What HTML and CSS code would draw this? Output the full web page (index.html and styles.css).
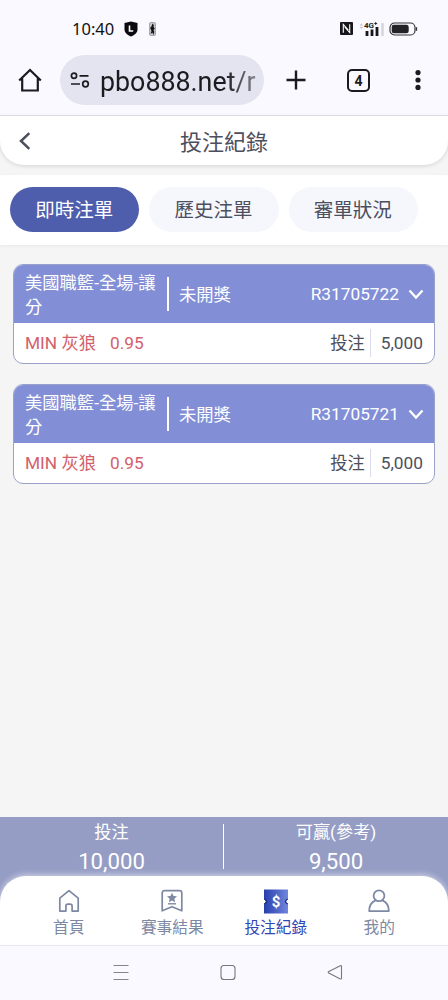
FILE: index.html
```html
<!DOCTYPE html>
<html lang="zh-Hant">
<head>
<meta charset="utf-8">
<meta name="viewport" content="width=device-width, initial-scale=1">
<title>投注紀錄</title>
<link rel="stylesheet" href="styles.css">
</head>
<body>
<div class="phone">
  <div class="status">
    <span class="clock">10:40</span>
    <svg class="shield" width="14" height="16" viewBox="0 0 14 16"><path d="M7 .5 13.500 2v6.500c0 3.500-3 5.500-6.500 7C3.500 14 .5 12 .5 8.500V2z" fill="#0b0b0f"/><path d="M5.500 4.500v5.500h3.700" fill="none" stroke="#fff" stroke-width="1.600"/></svg>
    <svg class="league" width="7" height="14" viewBox="0 0 7 14"><rect x=".5" y=".5" width="6" height="13" rx="1" fill="#c5c5cb" stroke="#85858b" stroke-width=".6"/><path d="M3.500 1.500 4.800 3 4.500 5l1.300 1.500L4.500 8l.8 2-1 3-.8-2.500L1.500 12l1-3L1.200 6l1.500-2z" fill="#111"/></svg>
    <span class="spacer"></span>
    <svg class="nfc" width="13" height="13" viewBox="0 0 13 13"><rect width="13" height="13" rx="1" fill="#17171b"/><path d="M3.300 10.800V2.500L8.300 8M9.700 2.200v8.300L4.700 5" fill="none" stroke="#fff" stroke-width="1.100"/></svg>
    <svg class="signal" width="26" height="16" viewBox="0 0 26 16"><path d="m.5 4.500 1.800-2 1.800 2zm0 1.500 1.800 2 1.800-2z" fill="#c4c4ca"/><text x="5" y="7.300" class="net">4G</text><path d="M16.700 1v3M15.200 2.500h3" stroke="#222" stroke-width=".9"/><path d="M8 10V15M13 8.500V15M18 6v9" stroke="#17171b" stroke-width="2.800"/><path d="M23.500 2v13" stroke="#d4d4da" stroke-width="2.500"/></svg>
    <svg class="battery" width="29" height="14" viewBox="0 0 29 14"><rect x="1" y="1" width="25" height="12" rx="4.500" fill="none" stroke="#33333a" stroke-width="1.200"/><rect x="2.700" y="2.700" width="17" height="8.600" rx="2.300" fill="#222227"/><path d="M27.500 5.200v3.600" stroke="#33333a" stroke-width="1.300"/></svg>
  </div>
  <div class="browser">
    <svg class="b-home" width="24" height="24" viewBox="0 0 24 24"><path d="M1.200 12.500 12 2l10.800 10.500M4.200 10.500v12h15.600v-12" fill="none" stroke="#1b1b1f" stroke-width="2.200"/></svg>
    <div class="address">
      <svg width="20" height="16" viewBox="0 0 20 16" fill="none" stroke="#1b1b1f" stroke-width="1.700"><circle cx="4" cy="3.800" r="2.600"/><path d="M9.500 3.800H18.500M1 12h9"/><circle cx="15.500" cy="12" r="2.800"/></svg>
      <span class="url">pbo888.net/r</span>
    </div>
    <svg class="b-plus" width="20" height="20" viewBox="0 0 20 20"><path d="M10 .5v19M.5 10h19" stroke="#1b1b1f" stroke-width="2.400"/></svg>
    <span class="b-tabs">4</span>
    <svg class="b-more" width="6" height="20" viewBox="0 0 6 20" fill="#1b1b1f"><circle cx="3" cy="2.600" r="2.600"/><circle cx="3" cy="10" r="2.600"/><circle cx="3" cy="17.400" r="2.600"/></svg>
  </div>
  <header class="title-bar">
    <svg class="back" width="12" height="18" viewBox="0 0 12 18"><path d="M10.300 1.200 2 9l8.300 7.800" fill="none" stroke="#4c4f5e" stroke-width="2.500"/></svg>
    <h1>投注紀錄</h1>
  </header>
  <nav class="tabs">
    <span class="tab tab-active">即時注單</span>
    <span class="tab">歷史注單</span>
    <span class="tab">審單狀況</span>
  </nav>
  <main class="bets">
    <article class="bet">
      <div class="bet-head">
        <span class="bet-type">美國職籃-全場-讓分</span>
        <span class="bet-state">未開獎</span>
        <span class="bet-id">R31705722</span>
        <svg class="chevron" width="16" height="11" viewBox="0 0 16 11"><path d="m1.500 1.500 6.500 7 6.500-7" fill="none" stroke="#fff" stroke-width="2.300"/></svg>
      </div>
      <div class="bet-body">
        <span class="pick">MIN 灰狼</span><span class="odds">0.95</span>
        <span class="stake-label">投注</span><span class="stake">5,000</span>
      </div>
    </article>
    <article class="bet">
      <div class="bet-head">
        <span class="bet-type">美國職籃-全場-讓分</span>
        <span class="bet-state">未開獎</span>
        <span class="bet-id">R31705721</span>
        <svg class="chevron" width="16" height="11" viewBox="0 0 16 11"><path d="m1.500 1.500 6.500 7 6.500-7" fill="none" stroke="#fff" stroke-width="2.300"/></svg>
      </div>
      <div class="bet-body">
        <span class="pick">MIN 灰狼</span><span class="odds">0.95</span>
        <span class="stake-label">投注</span><span class="stake">5,000</span>
      </div>
    </article>
  </main>
  <section class="summary">
    <div class="total"><span>投注</span><strong>10,000</strong></div>
    <div class="total"><span>可贏(參考)</span><strong>9,500</strong></div>
  </section>
  <nav class="bottom-nav">
    <span class="item">
      <svg width="24" height="26" viewBox="0 0 24 26" fill="none" stroke="#7d88a3" stroke-width="1.700" stroke-linejoin="round"><path d="M2.800 10.200 12 2.600l9.200 7.600v12.900h-6.100v-4.900q0-2-2-2h-2.200q-2 0-2 2v4.900H2.800z"/></svg>
      <span>首頁</span>
    </span>
    <span class="item">
      <svg width="24" height="26" viewBox="0 0 24 26" fill="none" stroke="#7d88a3" stroke-width="1.700" stroke-linejoin="round"><path d="M2.200 22.800V5q0-2.300 2.300-2.300h15q2.300 0 2.300 2.300v17.800L12 18.700z"/><path d="M8 15.800h8" stroke-width="1.400"/><path d="m12 4.700 1.500 3.200 3.500.4-2.600 2.400.7 3.500-3.100-1.800-3.100 1.800.7-3.500L7 8.300l3.500-.4z" fill="#7d88a3" stroke="none"/></svg>
      <span>賽事結果</span>
    </span>
    <span class="item item-active">
      <svg width="24" height="26" viewBox="0 0 24 26"><defs><linearGradient id="ticket"><stop offset="0" stop-color="#263fae"/><stop offset="1" stop-color="#7186dc"/></linearGradient></defs><path d="M0 1.500h24v24H0z" fill="url(#ticket)"/><path d="M0 11.300q3.600 2.200 0 4.400M24 11.300q-3.600 2.200 0 4.400" fill="#fff"/><path d="M.3 11q4.600 2.500 0 5M23.700 11q-4.600 2.500 0 5" fill="none" stroke="#1c2c80" stroke-width="1.300"/><text x="12" y="18.800" class="dollar">$</text></svg>
      <span>投注紀錄</span>
    </span>
    <span class="item">
      <svg width="24" height="26" viewBox="0 0 24 26" fill="none" stroke="#7d88a3" stroke-width="1.800" stroke-linejoin="round"><circle cx="12" cy="7.800" r="5.400"/><path d="M8.600 12.400C4.700 14 2.200 18 2.200 23.100h19.600c0-5.100-2.500-9.100-6.400-10.700"/></svg>
      <span>我的</span>
    </span>
  </nav>
  <div class="system-nav">
    <svg width="16" height="16" viewBox="0 0 16 16"><path d="M.5 1.500h15M.5 8.500h15M.5 15.500h15" stroke="#85858b" stroke-width="1"/></svg>
    <svg width="16" height="16" viewBox="0 0 16 16"><rect x="1" y="1.500" width="14" height="14" rx="3" fill="none" stroke="#77777d" stroke-width="1.100"/></svg>
    <svg width="16" height="16" viewBox="0 0 16 16"><path d="M13.300 1.700 1.800 7.500q-1.200.7 0 1.400l11.500 6q1.200.3 1.200-.9V2.600q0-1.200-1.200-.9z" fill="none" stroke="#77777d" stroke-width="1.100"/></svg>
  </div>
</div>
</body>
</html>
```
FILE: styles.css
```css
* { box-sizing: border-box; }
body {
  margin: 0;
  font-family: Roboto, "Noto Sans CJK TC", sans-serif;
  color: #4c4f5e;
}
svg { display: block; flex: none; }
.phone {
  width: 448px;
  height: 1000px;
  display: flex;
  flex-direction: column;
  background: #f5f5f6;
  overflow: hidden;
}
.status {
  height: 47px;
  flex: none;
  display: flex;
  align-items: center;
  padding: 10px 30px 0 72px;
  background: #faf9ff;
}
.clock { font: 400 16.500px/20px "Noto Sans", sans-serif; color: #111; width: 39px; white-space: nowrap; }
.shield { margin-left: 13px; }
.league { margin-left: 11px; }
.spacer { flex: 1; }
.signal { margin-left: 6px; }
.net { font: 700 8px Roboto, sans-serif; fill: #222; }
.battery { margin-left: 4px; }
.browser {
  height: 69px;
  flex: none;
  display: flex;
  align-items: center;
  padding: 0 27px 2px 18px;
  background: #faf9ff;
  border-bottom: 1px solid #e3e3ec;
}
.address {
  width: 204px;
  height: 50px;
  margin-left: 18px;
  padding-left: 10px;
  border-radius: 25px;
  background: #e3e4f0;
  display: flex;
  align-items: center;
  gap: 10px;
}
.url {
  padding-top: 3px;
  font-size: 26.800px;
  line-height: 36px;
  white-space: nowrap;
  background: linear-gradient(90deg, #1b1b1f 80%, #85868e);
  background-clip: text;
  color: transparent;
}
.b-plus { margin-left: 22px; }
.b-tabs {
  width: 23px;
  height: 23px;
  margin-left: 41px;
  border: 2px solid #1b1b1f;
  border-radius: 5px;
  font: 700 14px/20px Roboto, sans-serif;
  color: #1b1b1f;
  text-align: center;
}
.b-more { margin-left: 45px; }
.title-bar {
  height: 49px;
  flex: none;
  display: grid;
  grid-template-columns: 40px 1fr 40px;
  align-items: center;
  background: #fff;
  border-radius: 0 0 24px 24px;
  box-shadow: 0 1px 4px rgba(0, 0, 0, .14);
}
.back { margin-left: 19px; }
h1 { margin: 0; padding-top: 4px; font-size: 22px; font-weight: 400; line-height: 32px; text-align: center; }
.tabs {
  height: 70px;
  flex: none;
  margin-top: 10px;
  padding: 12px 10px;
  display: flex;
  gap: 10px;
  background: #fff;
  box-shadow: 0 1px 3px rgba(0, 0, 0, .06);
}
.tab {
  width: 129.300px;
  height: 45px;
  border-radius: 23px;
  background: #f6f7fc;
  font-size: 19.500px;
  line-height: 48px;
  text-align: center;
  padding-right: 1px;
}
.tab-active { background: #4f5dad; color: #fff; }
.bets {
  flex: 1;
  padding: 19px 13px 0;
  display: flex;
  flex-direction: column;
  gap: 20px;
}
.bet {
  height: 100px;
  border: 1px solid #99a2c8;
  border-radius: 10px;
  background: #fff;
  overflow: hidden;
  font-size: 17.300px;
}
.bet-head {
  height: 58px;
  display: flex;
  align-items: center;
  padding: 0 10px 0 11px;
  background: #828fd7;
  color: #fff;
}
.bet-type { width: 142px; padding-top: 1px; padding-right: 10px; line-height: 24px; }
.bet-state { height: 34px; line-height: 36px; padding-left: 10px; border-left: 2px solid #fff; }
.bet-id { margin-left: auto; line-height: 24px; }
.chevron { margin-left: 9px; }
.bet-body {
  height: 40px;
  display: flex;
  align-items: center;
  padding: 0 11px;
  line-height: 28px;
}
.pick, .odds { color: #d3606d; }
.odds { margin-left: 14px; }
.stake-label { margin-left: auto; }
.stake { margin-left: 5px; padding-left: 10px; border-left: 1px solid #d9dcec; }
.summary {
  height: 84px;
  flex: none;
  display: grid;
  grid-template-columns: 223px 1fr;
  background: #959dc5;
  color: #fff;
}
.total { height: 59px; display: flex; flex-direction: column; align-items: center; padding-top: 3px; }
.total + .total { height: 45px; margin-top: 7px; padding-top: 0; border-left: 1px solid #fff; }
.total + .total span { margin-top: -4px; }
.total span { font-size: 17.200px; line-height: 25px; }
.total strong { font-size: 22.200px; font-weight: 400; line-height: 32px; }
.bottom-nav {
  height: 69px;
  flex: none;
  margin-top: -25px;
  padding: 12px 17px 0;
  display: grid;
  grid-template-columns: repeat(4, 1fr);
  background: #fff;
  border-radius: 26px 26px 0 0;
  box-shadow: 0 -1px 6px rgba(255, 255, 255, .6);
}
.item {
  display: flex;
  flex-direction: column;
  align-items: center;
  font-size: 15.700px;
  line-height: 27px;
  color: #7d88a3;
}
.item-active { color: #3046b5; }
.dollar { font: 700 15px Roboto, sans-serif; fill: #fff; text-anchor: middle; }
.system-nav {
  height: 55px;
  flex: none;
  display: flex;
  justify-content: center;
  gap: 91px;
  padding-top: 18px;
  padding-left: 7px;
  background: #faf9ff;
  border-top: 1px solid #e6e6ee;
}
```
